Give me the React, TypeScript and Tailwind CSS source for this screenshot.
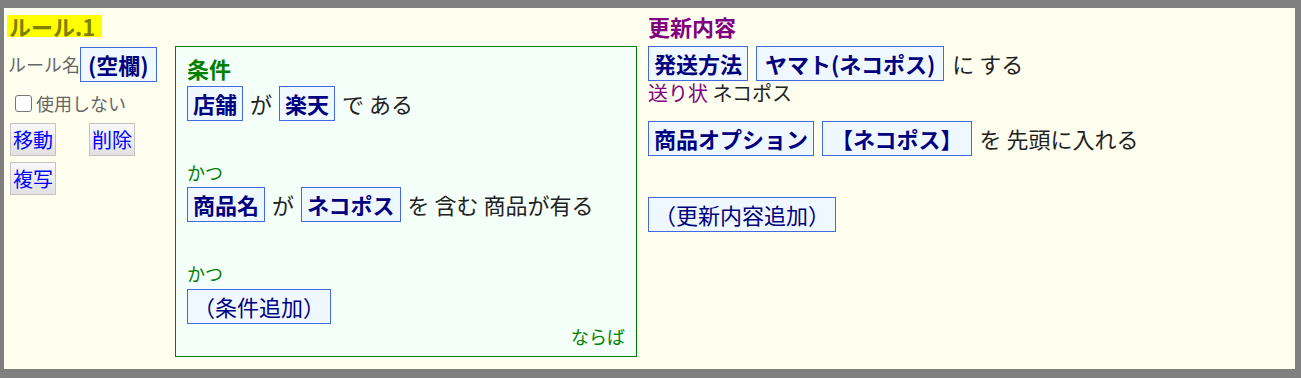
const font = { fontFamily: '"Noto Sans CJK JP", "Noto Sans", sans-serif' };

function Chip({ children, bold = true, px = 'px-[5px]' }: { children: React.ReactNode; bold?: boolean; px?: string }) {
  return (
    <span
      className={`inline-block shrink-0 border border-[#4169e1] bg-[#f0f8ff] ${px} py-[3px] text-[22px] leading-[27px] text-[#000080] whitespace-nowrap ${
        bold ? 'font-bold' : 'font-normal'
      }`}
    >
      {children}
    </span>
  );
}

function GrayButton({ children }: { children: React.ReactNode }) {
  return (
    <span className="inline-block w-[46px] border border-[#c3c3c3] bg-linear-to-b from-[#f9f9f9] to-[#e1e1e1] py-[3px] text-center text-[20px] leading-[25px] text-[#0000ff]">
      {children}
    </span>
  );
}

function Word({ children }: { children: React.ReactNode }) {
  return <span className="text-[22px] leading-[35px] text-[#222] whitespace-pre">{children}</span>;
}

export default function App() {
  return (
    <div className="h-[378px] w-[1301px] bg-[#808080] pt-2 pl-1 pr-[6px]" style={font}>
      <div className="h-[361px] bg-[#fffff0] pl-[3px] pt-[7px]">
        <div className="grid grid-cols-[168px_473px_1fr]">
          {/* heading row */}
          <div className="col-span-2 h-[31px]">
            <span className="inline-block bg-[#ffff00] pl-[2px] pr-[7px] text-[22px] font-bold leading-[22px] text-[#808000]">
              ルール.1
            </span>
          </div>
          <div className="text-[22px] font-bold leading-[22px] text-[#800080]">更新内容</div>

          {/* left controls */}
          <div className="pt-[1px]">
            <div className="flex items-center">
              <span className="pl-[1px] text-[18px] text-[#666]">ルール名</span>
              <Chip px="px-[7px]">(空欄)</Chip>
            </div>
            <label className="mt-[9px] flex h-[24px] items-center gap-[4px] pl-[8px] text-[18px] text-[#666]">
              <span className="inline-block h-[17px] w-[17px] rounded-[3px] border border-[#767676] bg-white" />
              使用しない
            </label>
            <div className="mt-[8px] flex gap-[33px] pl-[3px]">
              <GrayButton>移動</GrayButton>
              <GrayButton>削除</GrayButton>
            </div>
            <div className="mt-[6px] pl-[3px]">
              <GrayButton>複写</GrayButton>
            </div>
          </div>

          {/* conditions */}
          <div>
            <div className="flex h-[311px] w-[462px] flex-col border border-[#008000] bg-[#f5fffa] pl-[11px] pr-[11px] pt-[7px]">
              <div className="text-[22px] font-bold leading-[28px] text-[#008000]">条件</div>
              <div className="mt-[4px] flex items-center gap-[7px]">
                <Chip>店舗</Chip>
                <Word>が</Word>
                <Chip>楽天</Chip>
                <Word>で ある</Word>
              </div>
              <div className="mt-[39px] text-[18px] leading-[24px] text-[#008000]">かつ</div>
              <div className="mt-[3px] flex items-center gap-[7px]">
                <Chip>商品名</Chip>
                <Word>が</Word>
                <Chip>ネコポス</Chip>
                <Word>を 含む 商品が有る</Word>
              </div>
              <div className="mt-[39px] text-[18px] leading-[24px] text-[#008000]">かつ</div>
              <div className="mt-[4px] flex">
                <Chip bold={false}>（条件追加）</Chip>
              </div>
              <div className="mt-auto pb-[9px] text-right text-[18px] leading-[24px] text-[#008000]">ならば</div>
            </div>
          </div>

          {/* updates */}
          <div>
            <div className="flex items-center gap-[8px]">
              <Chip>発送方法</Chip>
              <Chip px="px-[8px]">ヤマト(ネコポス)</Chip>
              <Word>に する</Word>
            </div>
            <div className="text-[20px] leading-[24px] whitespace-pre">
              <span className="text-[#800080]">送り状</span>
              <span className="text-[#222]"> ネコポス</span>
            </div>
            <div className="mt-[16px] flex items-center gap-[8px]">
              <Chip>商品オプション</Chip>
              <Chip>
                <span className="px-[3px]">【ネコポス】</span>
              </Chip>
              <Word>を 先頭に入れる</Word>
            </div>
            <div className="mt-[41px] flex">
              <Chip bold={false}>（更新内容追加）</Chip>
            </div>
          </div>
        </div>
      </div>
    </div>
  );
}
